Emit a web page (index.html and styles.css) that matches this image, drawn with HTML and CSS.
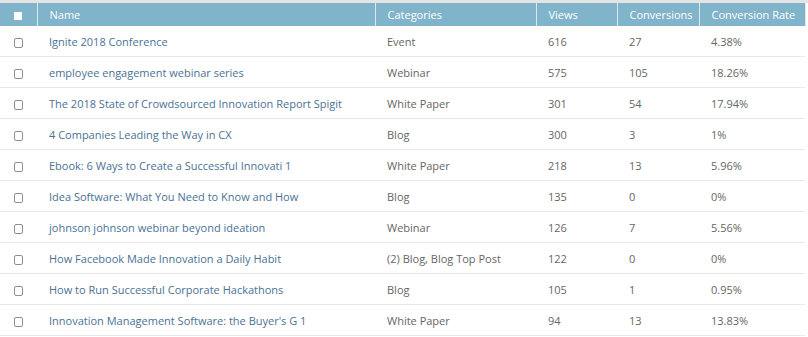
FILE: index.html
```html
<!DOCTYPE html>
<html>
<head>
<meta charset="utf-8">
<link rel="stylesheet" href="styles.css">
</head>
<body>
<div class="wrap">
<table class="grid">
  <colgroup>
    <col class="c-check"><col class="c-name"><col class="c-cat"><col class="c-views"><col class="c-conv"><col class="c-rate">
  </colgroup>
  <thead>
    <tr>
      <th class="chk"><span class="box-head"></span></th>
      <th>Name</th>
      <th>Categories</th>
      <th>Views</th>
      <th>Conversions</th>
      <th>Conversion Rate</th>
    </tr>
  </thead>
  <tbody>
    <tr><td class="chk"><span class="box"></span></td><td class="name">Ignite 2018 Conference</td><td>Event</td><td>616</td><td>27</td><td>4.38%</td></tr>
    <tr><td class="chk"><span class="box"></span></td><td class="name">employee engagement webinar series</td><td>Webinar</td><td>575</td><td>105</td><td>18.26%</td></tr>
    <tr><td class="chk"><span class="box"></span></td><td class="name">The 2018 State of Crowdsourced Innovation Report Spigit</td><td>White Paper</td><td>301</td><td>54</td><td>17.94%</td></tr>
    <tr><td class="chk"><span class="box"></span></td><td class="name">4 Companies Leading the Way in CX</td><td>Blog</td><td>300</td><td>3</td><td>1%</td></tr>
    <tr><td class="chk"><span class="box"></span></td><td class="name">Ebook: 6 Ways to Create a Successful Innovati 1</td><td>White Paper</td><td>218</td><td>13</td><td>5.96%</td></tr>
    <tr><td class="chk"><span class="box"></span></td><td class="name">Idea Software: What You Need to Know and How</td><td>Blog</td><td>135</td><td>0</td><td>0%</td></tr>
    <tr><td class="chk"><span class="box"></span></td><td class="name">johnson johnson webinar beyond ideation</td><td>Webinar</td><td>126</td><td>7</td><td>5.56%</td></tr>
    <tr><td class="chk"><span class="box"></span></td><td class="name">How Facebook Made Innovation a Daily Habit</td><td>(2) Blog, Blog Top Post</td><td>122</td><td>0</td><td>0%</td></tr>
    <tr><td class="chk"><span class="box"></span></td><td class="name">How to Run Successful Corporate Hackathons</td><td>Blog</td><td>105</td><td>1</td><td>0.95%</td></tr>
    <tr><td class="chk"><span class="box"></span></td><td class="name">Innovation Management Software: the Buyer's G 1</td><td>White Paper</td><td>94</td><td>13</td><td>13.83%</td></tr>
  </tbody>
</table>
</div>
</body>
</html>
```
FILE: styles.css
```css
html, body {
  margin: 0;
  padding: 0;
  background: #fff;
}
body {
  font-family: "Open Sans", "DejaVu Sans", sans-serif;
  font-size: 11px;
  color: #666;
}
.wrap {
  border-top: 3px solid #e4e4e4;
  width: 808px;
}
.grid {
  border-collapse: collapse;
  table-layout: fixed;
  width: 805px;
}
.c-check { width: 37px; }
.c-name { width: 338px; }
.c-cat { width: 161px; }
.c-views { width: 81px; }
.c-conv { width: 82px; }
.c-rate { width: 106px; }
thead th {
  background: #7fb4ca;
  color: #fff;
  font-weight: normal;
  text-align: left;
  height: 23px;
  padding: 0 0 0 12px;
  border-right: 1px solid #dbe9ef;
  white-space: nowrap;
}
thead th.chk {
  padding: 0;
  text-align: center;
}
tbody td {
  height: 30px;
  padding: 0 0 0 12px;
  border-bottom: 1px solid #e8e8e8;
  white-space: nowrap;
  overflow: hidden;
}
tbody td.chk {
  padding: 0;
  text-align: center;
}
td.name {
  color: #4a7295;
}
.box-head {
  display: inline-block;
  width: 8px;
  height: 8px;
  background: #fff;
  border-radius: 1px;
  vertical-align: middle;
}
.box {
  display: inline-block;
  width: 7px;
  height: 8px;
  border: 1px solid #8f8f8f;
  border-radius: 2px;
  vertical-align: middle;
  background: #fff;
}
```
